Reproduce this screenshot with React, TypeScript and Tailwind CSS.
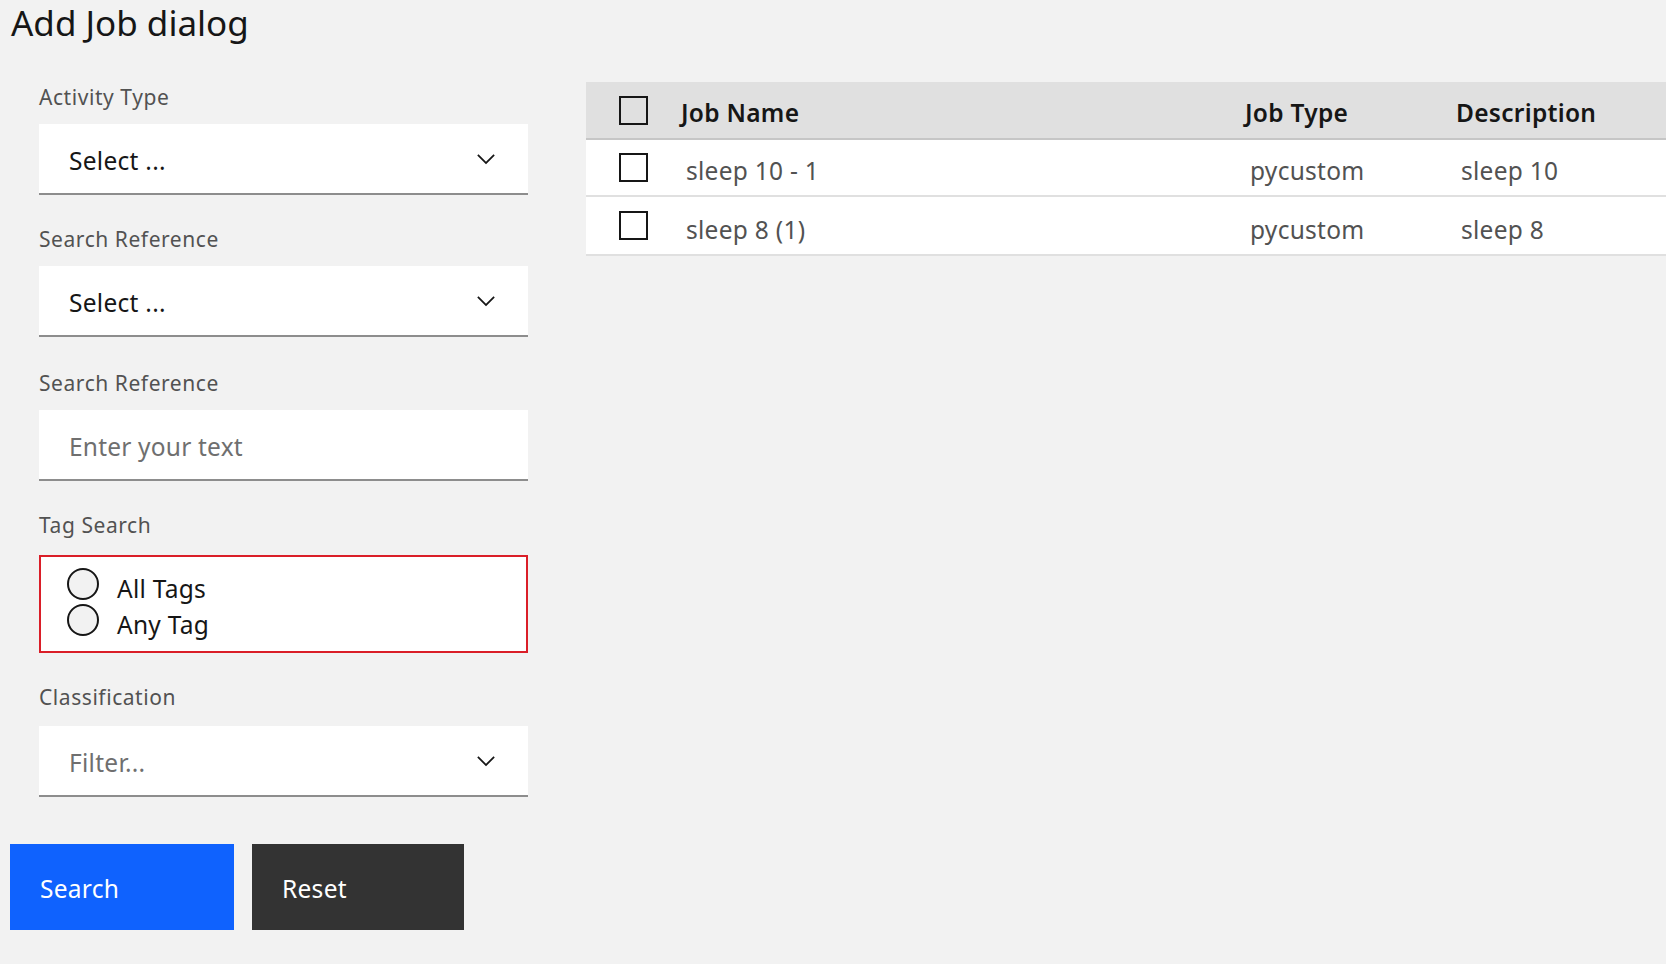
const chevron = (
  <svg width="28" height="28" viewBox="0 0 16 16" fill="#161616">
    <path d="M8 11L3 6 3.7 5.3 8 9.6 12.3 5.3 13 6z" />
  </svg>
);

function Label({ text, mb }: { text: string; mb: string }) {
  return <div className={`h-[28px] pt-[1px] text-[21px] leading-[28px] tracking-[0.56px] text-[#525252] ${mb}`}>{text}</div>;
}

function Select({ text, muted }: { text: string; muted?: boolean }) {
  return (
    <div className="flex h-[71px] items-center justify-between border-b-2 border-[#8d8d8d] bg-white pl-[30px] pr-[28px]">
      <span className={`pt-[5px] text-[24.5px] tracking-[0.28px] ${muted ? 'text-[#6f6f6f]' : 'text-[#161616]'}`}>{text}</span>
      {chevron}
    </div>
  );
}

function Radio({ text }: { text: string }) {
  return (
    <div className="flex h-[36px]">
      <div className="mt-[-1px] h-[32px] w-[32px] shrink-0 rounded-full border-2 border-[#161616] bg-[#f2f2f2]" />
      <span className="ml-[18px] pt-[2px] text-[24.5px] leading-[36px] tracking-[0.28px] text-[#161616]">{text}</span>
    </div>
  );
}

function Checkbox() {
  return <div className="h-[29px] w-[29px] border-2 border-[#161616] bg-transparent" />;
}

const rows = [
  ['sleep 10 - 1', 'pycustom', 'sleep 10'],
  ['sleep 8 (1)', 'pycustom', 'sleep 8'],
];

export default function App() {
  return (
    <div className="min-h-screen bg-[#f2f2f2] font-['Noto_Sans',sans-serif] text-[#161616]">
      <h1 className="pl-[11px] pt-[2px] text-[35px] leading-[42px] font-normal">Add Job dialog</h1>
      <div className="flex">
        <div className="w-[586px] shrink-0 pl-[10px]">
          <div className="ml-[29px] mt-[38px] w-[489px]">
            <Label text="Activity Type" mb="mb-[14px]" />
            <Select text="Select ..." />
            <div className="mt-[29px]">
              <Label text="Search Reference" mb="mb-[14px]" />
              <Select text="Select ..." />
            </div>
            <div className="mt-[31px]">
              <Label text="Search Reference" mb="mb-[14px]" />
              <div className="flex h-[71px] items-center border-b-2 border-[#8d8d8d] bg-white pl-[30px]">
                <span className="pt-[5px] text-[24.5px] tracking-[0.2px] text-[#6f6f6f]">Enter your text</span>
              </div>
            </div>
            <div className="mt-[29px]">
              <Label text="Tag Search" mb="mb-[17px]" />
              <div className="h-[98px] border-2 border-[#da1e28] bg-white pl-[26px] pt-[12px]">
                <Radio text="All Tags" />
                <Radio text="Any Tag" />
              </div>
            </div>
            <div className="mt-[29px]">
              <Label text="Classification" mb="mb-[16px]" />
              <Select text="Filter..." muted />
            </div>
          </div>
          <div className="mt-[47px] flex gap-[18px]">
            <button className="flex h-[86px] w-[224px] items-center bg-[#0f62fe] pl-[30px] pt-[5px] text-left text-[24.5px] tracking-[0.28px] text-white">
              Search
            </button>
            <button className="flex h-[86px] w-[212px] items-center bg-[#333333] pl-[30px] pt-[5px] text-left text-[24.5px] tracking-[0.28px] text-white">
              Reset
            </button>
          </div>
        </div>
        <div className="mt-[38px] flex-1">
          <div className="grid h-[58px] grid-cols-[95px_564px_211px_1fr] items-center border-b-2 border-[#c6c6c6] bg-[#e0e0e0] text-[24.5px] font-semibold tracking-[0.28px]">
            <div className="pl-[33px]"><Checkbox /></div>
            <div className="pt-[7px]">Job Name</div>
            <div className="pt-[7px]">Job Type</div>
            <div className="pt-[7px]">Description</div>
          </div>
          {rows.map((r, i) => (
            <div
              key={r[0]}
              className={`grid grid-cols-[95px_564px_211px_1fr] items-center border-b-2 border-[#e0e0e0] bg-white text-[24.5px] tracking-[0.28px] text-[#525252] ${i === 0 ? 'h-[57px]' : 'h-[59px]'}`}
            >
              <div className="pl-[33px]"><Checkbox /></div>
              <div className={`pl-[5px] ${i === 0 ? 'pt-[7px]' : 'pt-[9px]'}`}>{r[0]}</div>
              <div className={`pl-[5px] ${i === 0 ? 'pt-[7px]' : 'pt-[9px]'}`}>{r[1]}</div>
              <div className={`pl-[5px] ${i === 0 ? 'pt-[7px]' : 'pt-[9px]'}`}>{r[2]}</div>
            </div>
          ))}
        </div>
      </div>
    </div>
  );
}
